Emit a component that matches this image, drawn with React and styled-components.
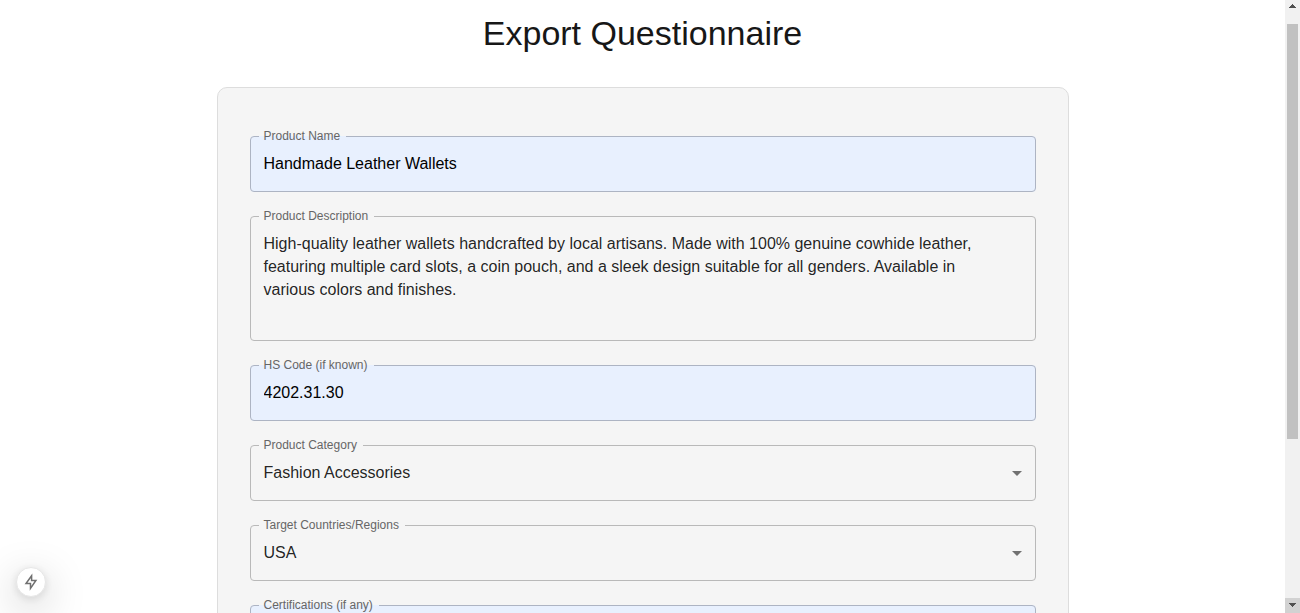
import { useState } from 'react';
import styled, { createGlobalStyle } from 'styled-components';

const GlobalStyle = createGlobalStyle`
*{
    box-sizing: border-box;
}
body{
    margin: 0;
    background-color: #fff;
    color: #171717;
    font-family: "Liberation Sans", Arial, Helvetica, sans-serif;
}
`;

const Page = styled.div`
display: flex;
height: 100vh;
overflow: hidden;
`;

const Container = styled.main`
flex: 1;
min-width: 0;
max-width: 900px;
margin: 0 auto;
padding: 13px 24px 0;
`;

const Title = styled.h1`
margin: 0 0 34px;
font-size: 34px;
font-weight: 400;
line-height: 40px;
text-align: center;
`;

const Card = styled.form`
display: flex;
flex-direction: column;
gap: 18px;
padding: 42px 32px 32px;
border: 1px solid #ddd;
border-radius: 10px;
background-color: #f5f5f5;
`;

const Outline = styled.fieldset`
min-width: 0;
margin: 0;
padding: 0;
border: 1px solid ${({ $filled }) => ($filled ? '#adb4c3' : '#b9b9b9')};
border-radius: 4px;
background-color: ${({ $filled }) => ($filled ? '#e8f0fe' : 'transparent')};

&:focus-within{
    border-color: #1976d2;
}
`;

const Legend = styled.legend`
margin-left: 8px;
padding: 0 6px 0 5px;
color: #666;
font-size: 12px;
line-height: 13px;
`;

const controlStyle = `
display: block;
width: 100%;
margin: 0;
padding: 9px 13px 16px;
border: 0;
outline: 0;
background: transparent;
font-family: inherit;
font-size: 16px;
line-height: 23px;
`;

const Input = styled.input`
${controlStyle}
height: 48px;
color: #000;
`;

const TextArea = styled.textarea`
${controlStyle}
padding-right: 32px;
color: rgba(0, 0, 0, 0.87);
resize: none;
overflow: hidden;
`;

const SelectWrap = styled.div`
position: relative;

svg{
    position: absolute;
    top: 9px;
    right: 6px;
    pointer-events: none;
}
`;

const Select = styled.select`
${controlStyle}
height: 48px;
color: rgba(0, 0, 0, 0.87);
appearance: none;
cursor: pointer;
`;

const DevButton = styled.button`
position: fixed;
left: 16px;
bottom: 16px;
display: flex;
align-items: center;
justify-content: center;
width: 30px;
height: 30px;
padding: 0;
border: 1px solid #e6e6e6;
border-radius: 50%;
background-color: #fff;
box-shadow: 0 11px 40px 0 rgba(0, 0, 0, 0.25), 0 2px 10px 0 rgba(0, 0, 0, 0.12);
cursor: pointer;
`;

const Scrollbar = styled.div`
display: flex;
flex-direction: column;
width: 15px;
background-color: #f1f1f1;
`;

const ScrollArrow = styled.button`
display: flex;
align-items: center;
justify-content: center;
width: 15px;
height: 15px;
padding: 0 0 ${({ $active }) => ($active ? '1px' : '3px')};
border: 0;
background-color: ${({ $active }) => ($active ? '#d2d2d2' : 'transparent')};
`;

const Track = styled.div`
flex: 1;
padding: 9px 2px 0;
`;

const Thumb = styled.div`
height: 72.3%;
background-color: #c1c1c1;
`;

function Field({ id, label, filled, children }) {
    return (
        <Outline $filled={filled}>
            <Legend><label htmlFor={id}>{label}</label></Legend>
            {children}
        </Outline>
    );
}

function SelectField({ id, label, value, onChange, options }) {
    return (
        <Field id={id} label={label}>
            <SelectWrap>
                <Select id={id} value={value} onChange={onChange}>
                    {options.map((option) => <option key={option}>{option}</option>)}
                </Select>
                <svg width="24" height="24" viewBox="0 0 24 24" fill="#717171" aria-hidden="true">
                    <path d="M7 10l5 5 5-5z" />
                </svg>
            </SelectWrap>
        </Field>
    );
}

function App() {
    const [form, setForm] = useState({
        name: 'Handmade Leather Wallets',
        description: 'High-quality leather wallets handcrafted by local artisans. Made with 100% genuine cowhide leather, featuring multiple card slots, a coin pouch, and a sleek design suitable for all genders. Available in various colors and finishes.',
        hsCode: '4202.31.30',
        category: 'Fashion Accessories',
        target: 'USA',
        certifications: '',
    });

    const update = (key) => (e) => setForm({ ...form, [key]: e.target.value });

    return (
        <>
            <GlobalStyle />
            <Page>
                <Container>
                    <Title>Export Questionnaire</Title>
                    <Card>
                        <Field id="name" label="Product Name" filled>
                            <Input id="name" value={form.name} onChange={update('name')} />
                        </Field>
                        <Field id="description" label="Product Description">
                            <TextArea id="description" rows={4} value={form.description} onChange={update('description')} />
                        </Field>
                        <Field id="hsCode" label="HS Code (if known)" filled>
                            <Input id="hsCode" value={form.hsCode} onChange={update('hsCode')} />
                        </Field>
                        <SelectField
                            id="category"
                            label="Product Category"
                            value={form.category}
                            onChange={update('category')}
                            options={['Fashion Accessories']}
                        />
                        <SelectField
                            id="target"
                            label="Target Countries/Regions"
                            value={form.target}
                            onChange={update('target')}
                            options={['USA']}
                        />
                        <Field id="certifications" label="Certifications (if any)" filled>
                            <Input id="certifications" value={form.certifications} onChange={update('certifications')} />
                        </Field>
                    </Card>
                </Container>
                <Scrollbar>
                    <ScrollArrow type="button" aria-label="Scroll up">
                        <svg width="7" height="4" viewBox="0 0 7 4" fill="#505050" shapeRendering="crispEdges">
                            <path d="M3 0h1v1h1v1h1v1h1v1H0V3h1V2h1V1h1z" />
                        </svg>
                    </ScrollArrow>
                    <Track><Thumb /></Track>
                    <ScrollArrow type="button" aria-label="Scroll down" $active>
                        <svg width="7" height="4" viewBox="0 0 7 4" fill="#505050" shapeRendering="crispEdges">
                            <path d="M0 0h7v1H6v1H5v1H4v1H3V3H2V2H1V1H0z" />
                        </svg>
                    </ScrollArrow>
                </Scrollbar>
            </Page>
            <DevButton type="button" aria-label="Open dev tools">
                <svg width="16" height="18" viewBox="0 0 16 18" fill="none" stroke="#707070" strokeWidth="1.5" aria-hidden="true">
                    <path d="M8.6 2.8L3 10.6h4.5v4.8L12.9 7.4H8.6z" />
                </svg>
            </DevButton>
        </>
    );
}

export default App;
